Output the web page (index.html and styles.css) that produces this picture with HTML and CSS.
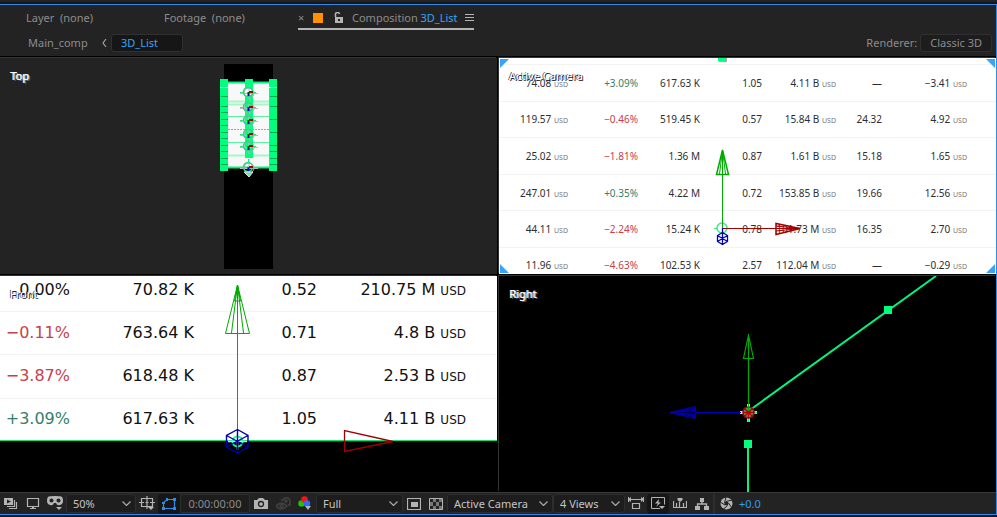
FILE: index.html
```html
<!DOCTYPE html>
<html lang="en">
<head>
  <meta charset="UTF-8">
  <meta name="viewport" content="width=device-width, initial-scale=1.0">
  <title>Composition 3D_List</title>
  <link rel="stylesheet" href="styles.css">
</head>
<body>

  <main class="panel">
    <nav class="tabs">
      <a href="#" class="tab tab-layer">Layer&nbsp; (none)</a>
      <a href="#" class="tab tab-footage">Footage&nbsp; (none)</a>
      <div class="tab tab-active">
        <button class="plain close" aria-label="Close">×</button>
        <span class="swatch"></span>
        <svg class="lock" width="9" height="11" viewBox="0 0 9 11"><path d="M1.5 5V3a2 2 0 0 1 4-1" fill="none" stroke="#b4b4b4" stroke-width="1.5"/><path d="M1 5h8v6H1z" fill="#b4b4b4"/><path d="M4 7h2v2H4z" fill="#232323"/></svg>
        <a href="#">Composition <b>3D_List</b></a>
        <button class="plain menu" aria-label="Panel menu"><svg width="9" height="8" viewBox="0 0 9 8"><path d="M0 .5h9M0 3.5h9M0 6.5h9" stroke="#b4b4b4"/></svg></button>
      </div>
    </nav>

    <div class="crumbs">
      <a href="#">Main_comp</a>
      <svg class="back" width="5" height="8" viewBox="0 0 5 8"><path d="M4 0L1 4l3 4" fill="none" stroke="#a0a0a0" stroke-width="1.200"/></svg>
      <button class="box current">3D_List</button>
      <span class="renderer">Renderer:</span>
      <button class="box">Classic 3D</button>
    </div>

    <div class="views">
      <section class="view view-top">
        <svg class="scene" viewBox="0 0 497 216">
          <path d="M224 6h49v205h-49z" fill="#000"/>
          <path d="M227 24h43v86h-43z" fill="#f8f8f8"/>
          <path d="M228 24.500h41M228 109.500h41" stroke="#00f57f" stroke-width="2"/>
          <path d="M228 43.500h41M228 46.500h41M228 97.500h41" stroke="#a8f5c8" stroke-width="2"/>
          <path d="M228 58.500h41M228 84.500h41" stroke="#5cf0a2"/>
          <path d="M228 71.500h41" stroke="#18ee81" stroke-dasharray="2 1"/>
          <path d="M220 21h8v92h-8zM269 21h8v92h-8zM245 21h8v79h-8z" fill="#00ff7f"/>
          <path d="M221 38.500h7M221 48.500h7M221 54.500h7M221 61.500h7M221 67.500h7M221 74.500h7M221 80.500h7M221 87.500h7M221 93.500h7M221 100.500h7M221 106.500h7M270 38.500h7M270 48.500h7M270 61.500h7M270 74.500h7M270 87.500h7M270 93.500h7M270 100.500h7M270 106.500h7" stroke="#00a854"/>
          <path d="M220 29.500h8M269 29.500h8" stroke="#d8f5e2"/>
          <defs>
            <g id="anchor">
              <path d="M-8 1.500H10M1 -8V8" stroke="#bbb"/>
              <circle cx="1" cy="1" r="5" fill="none" stroke="#aaa"/>
              <circle r="4.500" fill="none" stroke="#2fd488" stroke-width="1.500"/>
              <path d="M-8 .5h4M4 .5h4M.5 -8v4" stroke="#20e583"/>
              <path d="M.5 0v4" stroke="#0000b4" stroke-width="2"/>
              <path d="M1 0h4" stroke="#a00" stroke-width="2"/>
              <path d="M0 0h2v1H0z" fill="#060"/>
            </g>
          </defs>
          <circle cx="248" cy="34" r="4.500" fill="#fff"/>
          <use href="#anchor" x="248" y="34"/>
          <use href="#anchor" x="248" y="49"/>
          <use href="#anchor" x="248" y="62"/>
          <use href="#anchor" x="248" y="76"/>
          <use href="#anchor" x="248" y="88"/>
          <use href="#anchor" x="248" y="109"/>
          <path d="M244 114l5 5 4-5z" fill="#6be5a8" stroke="#ddd"/>
        </svg>
        <h2 class="view-name light">Top</h2>
      </section>

      <section class="view view-camera">
        <table class="quotes">
          <colgroup><col class="price"><col class="change"><col class="volume"><col class="rel"><col class="cap"><col class="pe"><col class="eps"><col></colgroup>
          <tbody>
            <tr><td>74.08 <small>USD</small></td><td class="up">+3.09%</td><td>617.63 K</td><td>1.05</td><td>4.11 B <small>USD</small></td><td>—</td><td>−3.41 <small>USD</small></td><td></td></tr>
            <tr><td>119.57 <small>USD</small></td><td class="down">−0.46%</td><td>519.45 K</td><td>0.57</td><td>15.84 B <small>USD</small></td><td>24.32</td><td>4.92 <small>USD</small></td><td></td></tr>
            <tr><td>25.02 <small>USD</small></td><td class="down">−1.81%</td><td>1.36 M</td><td>0.87</td><td>1.61 B <small>USD</small></td><td>15.18</td><td>1.65 <small>USD</small></td><td></td></tr>
            <tr><td>247.01 <small>USD</small></td><td class="up">+0.35%</td><td>4.22 M</td><td>0.72</td><td>153.85 B <small>USD</small></td><td>19.66</td><td>12.56 <small>USD</small></td><td></td></tr>
            <tr><td>44.11 <small>USD</small></td><td class="down">−2.24%</td><td>15.24 K</td><td>0.78</td><td>101.73 M <small>USD</small></td><td>16.35</td><td>2.70 <small>USD</small></td><td></td></tr>
            <tr><td>11.96 <small>USD</small></td><td class="down">−4.63%</td><td>102.53 K</td><td>2.57</td><td>112.04 M <small>USD</small></td><td>—</td><td>−0.29 <small>USD</small></td><td></td></tr>
          </tbody>
        </table>
        <svg class="scene" viewBox="0 0 497 216">
          <path d="M1 1h9l-9 9zM487 1h9v9zM1 215v-9l9 9zM496 215v-9l-9 9z" fill="#36a3ff"/>
          <path d="M220 0h8v4h-8z" fill="#aaa"/>
          <path d="M219 0h8v3h-8z" fill="#00ff7f"/>
          <circle cx="223" cy="170" r="5" fill="none" stroke="#3de894" stroke-width="1.500"/>
          <path d="M215 170.500h4M223.500 163v3" stroke="#3de894"/>
          <g fill="none" stroke="#0a0">
            <path d="M223.500 170V92"/>
            <path d="M223.500 92l-6 24.500h12z" stroke-width="1.500"/>
            <path d="M223.500 92l-3 24M223.500 92l3 24"/>
          </g>
          <g fill="none" stroke="#a00000">
            <path d="M224 170.500h77"/>
            <path d="M301 170.500l-24-5v11z" stroke-width="1.500"/>
            <path d="M301 170.500l-24-2.500M301 170.500l-24 2.500"/>
          </g>
          <path d="M223.500 174.500l5 3v6l-5 3-5-3v-6zM223.500 170v17M218.500 177.500l10 6M218.500 183.500l10-6" fill="none" stroke="#0000b4" stroke-width="1.300"/>
        </svg>
        <h2 class="view-name dark">Active Camera</h2>
      </section>

      <section class="view view-front">
        <table class="closeup">
          <colgroup><col class="change"><col class="volume"><col class="rel"><col class="cap"><col></colgroup>
          <tbody>
            <tr><td>0.00%</td><td>70.82 K</td><td>0.52</td><td>210.75 M <small>USD</small></td><td></td></tr>
            <tr><td class="down">−0.11%</td><td>763.64 K</td><td>0.71</td><td>4.8 B <small>USD</small></td><td></td></tr>
            <tr><td class="down">−3.87%</td><td>618.48 K</td><td>0.87</td><td>2.53 B <small>USD</small></td><td></td></tr>
            <tr><td class="up">+3.09%</td><td>617.63 K</td><td>1.05</td><td>4.11 B <small>USD</small></td><td></td></tr>
          </tbody>
        </table>
        <svg class="scene" viewBox="0 0 497 216">
          <path d="M0 164.500h497" stroke="#10e070"/>
          <path d="M237 165.500h156" stroke="#a00000"/>
          <circle cx="237.500" cy="165.500" r="5" fill="none" stroke="#00ff9d" stroke-width="2"/>
          <path d="M228 165.500h19M237.500 158v16" stroke="#ddd" stroke-width="1.500"/>
          <path d="M237.500 165V9M237.500 9l-12 48.500h24zM237.500 9l-6 48M237.500 9l6 48M237.500 9l-3 16h6z" fill="none" stroke="#0a0"/>
          <path d="M393 165.500l-48.500-11v21z" fill="none" stroke="#a00000" stroke-width="1.300"/>
          <path d="M237.500 153.500l10.500 6v11.500l-10.500 6-11-6v-11.500zM237.500 153.500V177M226.500 159.500l21.500 11.500M248 159.500L226.500 171" fill="none" stroke="#0000a8" stroke-width="1.400"/>
        </svg>
        <h2 class="view-name dark">Front</h2>
      </section>

      <section class="view view-right">
        <svg class="scene" viewBox="0 0 497 216">
          <path d="M251 134L437 0" stroke="#00f57f" stroke-width="2"/>
          <path d="M249 171v45" stroke="#00f57f" stroke-width="2"/>
          <path d="M385 30h8v8h-8zM245 164h8v8h-8z" fill="#00ff7f"/>
          <path d="M249.500 128v18M241 136.500h17" stroke="#ddd" stroke-width="3"/>
          <path d="M249.500 142v4M254 136.500h4" stroke="#00ff7f" stroke-width="2"/>
          <circle cx="249.500" cy="136.500" r="5.500" fill="#35b172" stroke="#b00000" stroke-width="1.500"/>
          <path d="M245 132l9 9M254 132l-9 9M244 136.500h11M249.500 131v11" stroke="#b00000" stroke-width="1.300"/>
          <path d="M249.500 135V58M249.500 59l-5 23.500h10z" fill="none" stroke="#0a0" stroke-width="1.200"/>
          <path d="M242 136.500h-70" stroke="#0000b4"/>
          <path d="M171 136.500l25.500-6v12z" fill="#000050" stroke="#0000b4"/>
          <path d="M171 136.500l25-4M171 136.500l25-2M171 136.500l25 2M171 136.500l25 4" stroke="#0000b4"/>
        </svg>
        <h2 class="view-name light">Right</h2>
      </section>
    </div>

    <footer class="toolbar">
      <button class="icon" aria-label="Always preview this view"><svg width="14" height="12" viewBox="0 0 14 12"><path d="M0 0h9v7H0z" fill="#b4b4b4"/><path d="M3 1.500l4 2-4 2z" fill="#232323"/><path d="M10.500 2v6.500H3M12.500 4v6.500H5" fill="none" stroke="#b4b4b4" stroke-width="1.200"/></svg></button>
      <button class="icon" aria-label="Primary viewer"><svg width="14" height="12" viewBox="0 0 14 12"><path d="M1.500.5h11v8h-11z" fill="none" stroke="#b4b4b4" stroke-width="1.200"/><path d="M6 8h2v2h2v1H4v-1h2z" fill="#b4b4b4"/></svg></button>
      <button class="icon" aria-label="VR view"><svg width="16" height="15" viewBox="0 0 16 15"><path d="M1 1q1-1 7-1t7 1q1 1 1 4t-3 4-4-2H7q-1 3-4 2T0 5t1-4z" fill="#b4b4b4"/><circle cx="4.500" cy="4.500" r="2" fill="#232323"/><circle cx="11.500" cy="4.500" r="2" fill="#232323"/><path d="M9 11h6l-3 3z" fill="#b4b4b4"/></svg></button>
      <span class="select zoom"><select aria-label="Magnification"><option>50%</option></select><svg width="9" height="5" viewBox="0 0 9 5"><path d="M.5.5l4 4 4-4" fill="none" stroke="#aaa" stroke-width="1.200"/></svg></span>
      <button class="icon" aria-label="Grid and guides"><svg width="16" height="15" viewBox="0 0 16 15"><path d="M2.500 2.500h11v8h-11zM8 0v5M8 8v5M0 6.500h5M11 6.500h5M6.500 6.500h3M8 5v3" fill="none" stroke="#b4b4b4" stroke-width="1.200"/><path d="M9 11h6l-3 3z" fill="#b4b4b4"/></svg></button>
      <button class="icon pressed" aria-label="Mask visibility"><svg width="14" height="12" viewBox="0 0 14 12"><path d="M1.500 10.500v-6L5 1.500h7.500v9z" fill="none" stroke="#2d8ceb" stroke-width="1.200"/><path d="M0 9h3v3H0zM11 9h3v3h-3zM11 0h3v3h-3zM4 0h2v3H4zM0 4h3v2H0z" fill="#2d8ceb"/></svg></button>
      <button class="time">0:00:00:00</button>
      <button class="icon" aria-label="Take snapshot"><svg width="14" height="12" viewBox="0 0 14 12"><path d="M0 2h3l2-2h4l2 2h3v9H0z" fill="#b4b4b4"/><circle cx="7" cy="6" r="2.500" fill="none" stroke="#232323" stroke-width="1.300"/></svg></button>
      <button class="icon" aria-label="Show snapshot"><svg width="15" height="14" viewBox="0 0 15 14"><g fill="none" stroke="#414141" stroke-width="1.600"><path d="M0 9q5-6 11 0-6 6-11 0z"/><circle cx="5.500" cy="9" r="1.500"/><path d="M5 3h2l2-2h3l2 2v5h-2"/><circle cx="10" cy="4" r="1"/></g></svg></button>
      <button class="icon" aria-label="Show channel"><svg width="14" height="15" viewBox="0 0 14 15"><circle cx="3.500" cy="7.500" r="3.200" fill="#1bc800"/><circle cx="6.500" cy="3.500" r="3.300" fill="#ff1010"/><circle cx="9" cy="7.500" r="3.200" fill="#3268ff"/><path d="M7 10h6l-3 4z" fill="#b4b4b4"/></svg></button>
      <span class="select resolution"><select aria-label="Resolution"><option>Full</option></select><svg width="9" height="5" viewBox="0 0 9 5"><path d="M.5.5l4 4 4-4" fill="none" stroke="#aaa" stroke-width="1.200"/></svg></span>
      <button class="icon" aria-label="Region of interest"><svg width="14" height="12" viewBox="0 0 14 12"><path d="M.5.5h13v11H.5z" fill="none" stroke="#b4b4b4" stroke-width="1.200"/><path d="M4 4h7v5H4z" fill="#b4b4b4"/></svg></button>
      <button class="icon" aria-label="Transparency grid"><svg width="14" height="12" viewBox="0 0 14 12"><path d="M4 1h3v3H4zM10 1h3v3h-3zM1 4h3v4H1zM7 4h3v4H7zM4 8h3v3H4zM10 8h3v3h-3z" fill="#777"/><path d="M.5.5h13v11H.5z" fill="none" stroke="#b4b4b4"/></svg></button>
      <span class="select camera"><select aria-label="3D view"><option>Active Camera</option></select><svg width="9" height="5" viewBox="0 0 9 5"><path d="M.5.5l4 4 4-4" fill="none" stroke="#aaa" stroke-width="1.200"/></svg></span>
      <span class="select layout"><select aria-label="View layout"><option>4 Views</option></select><svg width="9" height="5" viewBox="0 0 9 5"><path d="M.5.5l4 4 4-4" fill="none" stroke="#aaa" stroke-width="1.200"/></svg></span>
      <button class="icon" aria-label="Pixel aspect ratio"><svg width="16" height="13" viewBox="0 0 16 13"><path d="M1 2.500h14M4.500 6.500h7v5h-7zM.5 0v5M15.500 0v5" fill="none" stroke="#b4b4b4" stroke-width="1.200"/><path d="M0 2.500L3 0v5zM16 2.500L13 0v5z" fill="#b4b4b4"/></svg></button>
      <button class="icon pressed" aria-label="Fast previews"><svg width="14" height="13" viewBox="0 0 14 13"><path d="M9 11.500H.5V.5h13v7" fill="none" stroke="#b4b4b4"/><path d="M8 2L4 6.500h3L5 10l5-4.500H7.500zM8 9h6l-3 3z" fill="#b4b4b4"/></svg></button>
      <button class="icon" aria-label="Timeline"><svg width="14" height="12" viewBox="0 0 14 12"><path d="M.5 3v6.500h13V3M3.500 5v4M6.500 4v5M10.500 5v4" fill="none" stroke="#b4b4b4" stroke-width="1.200"/><path d="M4.500 0h5v2l-2.500 2-2.500-2z" fill="#b4b4b4"/></svg></button>
      <button class="icon" aria-label="Flowchart"><svg width="14" height="12" viewBox="0 0 14 12"><path d="M5 0h4v4H5zM0 8h5v4H0zM9 8h5v4H9z" fill="#b4b4b4"/><path d="M7 4v2M2.500 9V6h9v3" fill="none" stroke="#b4b4b4" stroke-width="1.300"/></svg></button>
      <span class="divider"></span>
      <button class="icon" aria-label="Reset exposure"><svg width="13" height="13" viewBox="0 0 13 13"><circle cx="6.500" cy="6.500" r="6" fill="#b4b4b4"/><circle cx="6.500" cy="6.500" r="2" fill="#232323"/><path d="M4.500 6L6 0M6 4.500l6-1.500M8.500 6l3.500 5M7.500 8.500L3 12.500M5 8L0 5" stroke="#232323"/></svg></button>
      <button class="exposure">+0.0</button>
    </footer>
  </main>

</body>
</html>
```
FILE: styles.css
```css
* {
  box-sizing: border-box;
}

body {
  margin: 0;
  height: 100vh;
  padding: 2px 0;
  display: flex;
  background: #161616;
  border-top: 2px solid #232323;
  color: #8c8c8c;
  font: 11px/16px "Noto Sans", "Open Sans", sans-serif;
}

a {
  color: inherit;
  text-decoration: none;
}

button,
select {
  font: inherit;
  color: inherit;
}

svg {
  display: block;
}

.panel {
  flex: 1;
  min-width: 0;
  display: flex;
  flex-direction: column;
  background: #232323;
  border: 1px solid #2d8ceb;
  border-left: 0;
}

/* panel tabs */
.tabs {
  display: flex;
  height: 25px;
}

.tab {
  padding-top: 5px;
  white-space: nowrap;
}

.tab-layer {
  width: 164px;
  padding-left: 26px;
}

.tab-footage {
  width: 134px;
}

.tab-active {
  display: flex;
  align-items: center;
  padding-top: 2px;
  border-bottom: 2px solid #b4b4b4;
}

.tab-active b {
  color: #36a3f7;
  font-weight: normal;
}

.plain {
  border: 0;
  padding: 0;
  background: none;
}

.close {
  width: 5px;
}

.swatch {
  width: 10px;
  height: 10px;
  margin: 0 11px 0 10px;
  background: #ff9100;
}

.lock {
  margin-right: 9px;
}

.menu {
  margin-left: 7px;
}

/* breadcrumbs */
.crumbs {
  display: flex;
  align-items: center;
  height: 26px;
  padding: 0 4px 0 28px;
}

.crumbs a {
  width: 70px;
}

.back {
  margin: 0 4px;
}

.box {
  height: 18px;
  padding: 0 9px;
  background: #1d1d1d;
  border: 1px solid #303030;
  border-radius: 3px;
  line-height: 16px;
}

.current {
  width: 72px;
  background: #161616;
  color: #36a3f7;
  text-align: left;
}

.renderer {
  margin-left: auto;
  margin-right: 3px;
}

/* four viewports */
.views {
  flex: 1;
  min-height: 0;
  display: grid;
  grid-template: minmax(0, 1fr) minmax(0, 1fr) / minmax(0, 1fr) minmax(0, 1fr);
  gap: 2px;
  padding-top: 2px;
  background: #000;
}

.view {
  position: relative;
  overflow: hidden;
  box-shadow: -1px -1px 0 #333;
}

.view-top {
  background: #232323;
}

.view-camera {
  padding-top: 6px;
  background: #fff;
}

.view-front {
  display: flex;
  flex-direction: column;
  justify-content: flex-end;
  padding-bottom: 52px;
  background: #000;
}

.view-right {
  background: #000;
}

.scene {
  position: absolute;
  inset: 0;
  width: 100%;
  height: 100%;
}

.view-name {
  position: absolute;
  top: 10px;
  left: 10px;
  margin: 0;
  font-size: 11px;
  font-weight: normal;
}

.light {
  color: #fff;
  text-shadow: 1px 0 0 #ddd, 2px 1px 0 #567;
}

.dark {
  color: #fff;
  text-shadow: 1px 1px 0 #223, -1px 0 0 #556;
}

table {
  width: 100%;
  flex-shrink: 0;
  table-layout: fixed;
  border-collapse: collapse;
  background: #fff;
  color: #2c2e35;
}

td {
  padding: 0;
  border-top: 1px solid #f3f3f3;
  text-align: right;
  white-space: nowrap;
}

small {
  line-height: 0;
}

.up {
  color: #337f6c;
}

.down {
  color: #c8404b;
}

.quotes {
  height: 219px;
  font-size: 10px;
}

.quotes small {
  color: #777;
  font-size: 7px;
}

.quotes .price { width: 69px; }
.quotes .change { width: 70px; }
.quotes .volume { width: 62px; }
.quotes .rel { width: 62px; }
.quotes .cap { width: 74px; }
.quotes .pe { width: 46px; }
.quotes .eps { width: 85px; }

.closeup {
  height: 172px;
  color: #111;
  font-family: "DejaVu Sans", sans-serif;
  font-size: 16px;
}

.closeup small {
  font-size: 12px;
}

.closeup .change { width: 70px; }
.closeup .volume { width: 124px; }
.closeup .rel { width: 123px; }
.closeup .cap { width: 149px; }

/* bottom toolbar */
.toolbar {
  display: flex;
  align-items: center;
  height: 22px;
  border-top: 1px solid #3a3a3a;
  color: #c4c4c4;
}

.icon {
  display: flex;
  align-items: center;
  justify-content: center;
  width: 22px;
  height: 20px;
  padding: 0;
  background: none;
  border: 0;
}

.pressed {
  background: #161616;
  border-radius: 3px;
}

.select {
  position: relative;
  height: 19px;
}

.select select {
  width: 100%;
  height: 100%;
  padding: 0 6px;
  appearance: none;
  background: #1d1d1d;
  border: 1px solid #2e2e2e;
  border-radius: 3px;
}

.select svg {
  position: absolute;
  top: 7px;
  right: 5px;
  pointer-events: none;
}

.zoom { width: 70px; }
.resolution { width: 87px; }
.camera { width: 106px; }
.layout { width: 72px; }

.time {
  width: 70px;
  height: 19px;
  padding: 0;
  background: #1d1d1d;
  border: 1px solid #2e2e2e;
  border-radius: 3px;
  color: #8c8c8c;
}

.divider {
  width: 2px;
  height: 20px;
  background: #2e2e2e;
}

.exposure {
  padding: 0 2px;
  background: none;
  border: 0;
  color: #2d9cf4;
}
```
